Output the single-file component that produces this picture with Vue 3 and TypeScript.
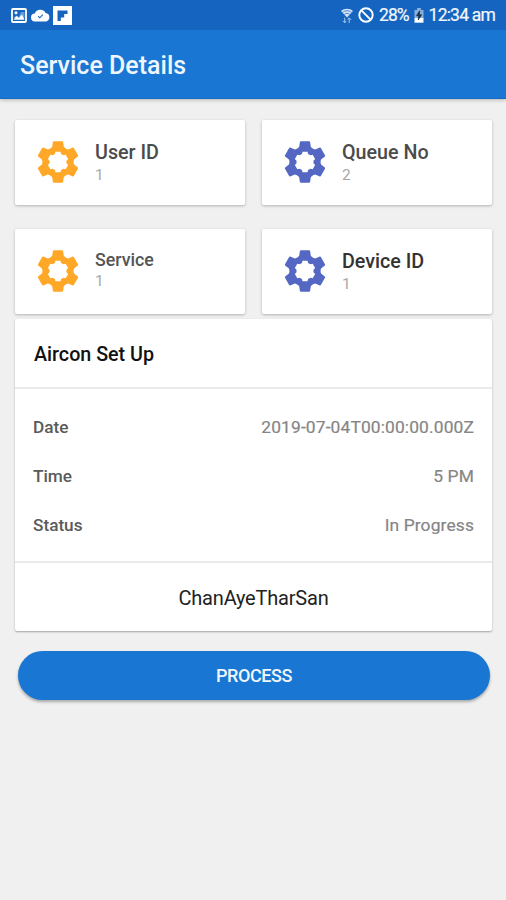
<script setup lang="ts">
interface Tile {
  label: string
  value: string
  tone: 'amber' | 'indigo'
  kind: string
}

const tiles: Tile[] = [
  { label: 'User ID', value: '1', tone: 'amber', kind: 'user' },
  { label: 'Queue No', value: '2', tone: 'indigo', kind: 'queue' },
  { label: 'Service', value: '1', tone: 'amber', kind: 'service' },
  { label: 'Device ID', value: '1', tone: 'indigo', kind: 'device' },
]

const rows = [
  { label: 'Date', value: '2019-07-04T00:00:00.000Z', kind: 'date' },
  { label: 'Time', value: '5 PM', kind: 'time' },
  { label: 'Status', value: 'In Progress', kind: 'status' },
]

// Closed six-lobed outline; each lobe is given as [sideways, outward] points.
function lobes(points: [number, number][]): string {
  const out: string[] = []
  for (let i = 0; i < 6; i++) {
    const a = (i * Math.PI) / 3
    for (const [x, r] of points) {
      const px = x * Math.cos(a) + r * Math.sin(a)
      const py = x * Math.sin(a) - r * Math.cos(a)
      out.push(`${px.toFixed(2)} ${py.toFixed(2)}`)
    }
  }
  return `M${out.join('L')}Z`
}

const gearPath =
  lobes([[-7, 14], [-5.8, 15.2], [-5.1, 20], [-4.4, 20.7], [4.4, 20.7], [5.1, 20], [5.8, 15.2], [7, 14]]) +
  lobes([[-3.1, 8], [-2.5, 10.3], [2.5, 10.3], [3.1, 8]])
</script>

<template>
  <div class="screen">
    <header class="top">
      <div class="status-bar">
        <div class="notices">
          <svg class="picture" viewBox="0 0 16 15">
            <rect x="1" y="1" width="14" height="13" rx="1" fill="none" stroke="#fff" stroke-width="1.8" />
            <path d="M2.5 9.2 5.5 7.6l2.4 1.2L10 4h3.5v6H2.5z" fill="#fff" opacity=".35" />
            <path d="M2.5 11.7 5.5 8l2.4 2.1L11 6.5l2.5 5.2z" fill="#fff" />
            <circle cx="5" cy="4.8" r="1.5" fill="#fff" />
          </svg>
          <svg class="cloud" viewBox="0 0 19 13">
            <path d="M4.3 12.5a4 4 0 0 1-.5-8A6 6 0 0 1 14.6 4a4.3 4.3 0 0 1 .2 8.5z" fill="#fff" />
            <path d="m7.2 7.2 1.6 1.6 3-3.2" fill="none" stroke="#1764c0" stroke-width="1.1" />
          </svg>
          <svg class="flip" viewBox="0 0 19 19">
            <path fill="#fff" fill-rule="evenodd" d="M0 0h19v19H0zM4.5 4.5v10.5h3.3v-3.5h3.4V8h3.3V4.5z" />
          </svg>
        </div>
        <div class="indicators">
          <svg class="wifi" viewBox="0 0 14 17">
            <path d="M1 3.9c3.6-3 8.4-3 12 0L7 10.5z" fill="#d3e3f5" />
            <path d="M2.5 5.4c2.8-2.2 6.2-2.2 9 0M4.4 7.4c1.8-1.3 3.4-1.3 5.2 0" fill="none" stroke="#1764c0" stroke-width=".7" />
            <path d="M4.7 10.7v5M2.7 13.8l2 2 1.5-1.8M9.2 16v-5M7.7 12.6l1.5-1.7 2 2" fill="none" stroke="#a5c4e9" stroke-width="1" />
          </svg>
          <svg class="blocked" viewBox="0 0 16 16">
            <circle cx="8" cy="8" r="6.7" fill="none" stroke="#fff" stroke-width="1.9" />
            <path d="m3.4 3.4 9.2 9.2" stroke="#fff" stroke-width="1.9" />
          </svg>
          <span class="percent">28%</span>
          <svg class="battery" viewBox="0 0 10 15">
            <path d="M3 0h4v2h2.5v8H.5V2H3z" fill="#88afd9" />
            <path d="M.5 10h9v4.7h-9z" fill="#fff" />
            <path d="m5.7 2.8-3.2 5h2.2L4.2 12l3.4-5.2H5.4z" fill="#172f48" stroke="#172f48" stroke-width=".7" />
          </svg>
          <span class="clock">12:34 am</span>
        </div>
      </div>
      <h1 class="title">Service Details</h1>
    </header>

    <main class="content">
      <section class="tiles">
        <article v-for="tile in tiles" :key="tile.label" class="tile" :class="tile.kind">
          <svg class="gear" :class="tile.tone" viewBox="-21 -21 42 42">
            <path :d="gearPath" fill-rule="evenodd" />
          </svg>
          <div class="tile-text">
            <h2>{{ tile.label }}</h2>
            <p>{{ tile.value }}</p>
          </div>
        </article>
      </section>

      <section class="details">
        <h2 class="details-title">Aircon Set Up</h2>
        <dl class="rows">
          <div v-for="row in rows" :key="row.label" class="row" :class="row.kind">
            <dt>{{ row.label }}</dt>
            <dd>{{ row.value }}</dd>
          </div>
        </dl>
        <p class="township">ChanAyeTharSan</p>
      </section>

      <button class="process" type="button">PROCESS</button>
    </main>
  </div>
</template>

<style>
body {
  margin: 0;
  background: #f0f0f0;
}
</style>

<style scoped>
.screen {
  min-height: 900px;
  box-sizing: border-box;
  background: #f0f0f0;
  font-family: Roboto, "Liberation Sans", sans-serif;
}
h1, h2, p, dl, dt, dd {
  margin: 0;
}
svg {
  display: block;
  flex: none;
}
.top {
  height: 99px;
  background: #1976d2;
  border-bottom: 1px solid #146bc1;
  box-sizing: border-box;
  box-shadow: 0 1px 4px rgba(0, 0, 0, 0.25);
}
.status-bar {
  display: flex;
  justify-content: space-between;
  height: 30px;
  padding: 0 11px;
  background: #1565c0;
  color: #f2f7fd;
}
.notices, .indicators {
  display: flex;
  align-items: center;
}
.picture {
  width: 16px;
  height: 15px;
}
.cloud {
  width: 19px;
  height: 13px;
  margin-left: 4px;
}
.flip {
  width: 19px;
  height: 19px;
  margin-left: 3px;
}
.indicators {
  height: 30px;
  font-size: 17.5px;
  line-height: 33px;
  letter-spacing: -0.8px;
  white-space: nowrap;
}
.percent, .clock {
  -webkit-text-stroke: 0.2px;
}
.percent {
  padding-top: 1px;
  letter-spacing: -1px;
}
.clock {
  padding-top: 1px;
}
.wifi {
  width: 14px;
  height: 17px;
}
.blocked {
  width: 16px;
  height: 16px;
  margin: 0 5px 0 4px;
}
.battery {
  width: 10px;
  height: 15px;
  margin: 0 5px 0 5px;
}
.title {
  padding-left: 20px;
  font-size: 25px;
  font-weight: 500;
  line-height: 72px;
  color: #eef5fd;
}
.content {
  padding: 21px 14px 0 15px;
}
.tiles {
  display: grid;
  grid-template-columns: 230px 230px;
  column-gap: 17px;
  row-gap: 24px;
}
.tile {
  display: flex;
  align-items: center;
  height: 85px;
  padding: 0 0 1px 22px;
  box-sizing: border-box;
  border-radius: 2px;
  background: #fff;
  box-shadow: 0 1px 3px rgba(0, 0, 0, 0.26);
}
.gear {
  width: 42px;
  height: 42px;
}
.amber {
  fill: #ffa726;
}
.indigo {
  fill: #5468c3;
}
.tile-text {
  padding: 4px 0 0 16px;
}
.tile h2 {
  font-size: 19.7px;
  font-weight: 500;
  line-height: 23px;
  color: #4b4b4b;
}
.tile p {
  font-size: 15.5px;
  line-height: 23px;
  color: #a8a8a8;
}
.tile.service h2 {
  font-size: 17.8px;
  line-height: 20px;
  color: #555;
}
.tile.service .tile-text {
  padding: 1px 0 0 16px;
}
.tile.device h2 {
  color: #333;
}
.details {
  height: 312px;
  margin-top: 5px;
  border-radius: 2px;
  background: #fff;
  box-shadow: 0 1px 2px rgba(0, 0, 0, 0.32);
}
.details-title {
  height: 68px;
  padding-left: 19px;
  font-size: 19.7px;
  font-weight: 500;
  line-height: 72px;
  color: #111;
}
.rows {
  height: 174px;
  padding: 14px 18px 10px;
  box-sizing: border-box;
  border-top: 2px solid #ebebeb;
}
.row {
  display: flex;
  justify-content: space-between;
  font-size: 17.2px;
  line-height: 49px;
}
.row dt {
  font-weight: 500;
  color: #5a5a5a;
}
.row dd {
  font-size: 17.4px;
  letter-spacing: 0.13px;
  -webkit-text-stroke: 0.2px;
  color: #858585;
}
.township {
  height: 70px;
  border-top: 2px solid #ebebeb;
  box-sizing: border-box;
  text-align: center;
  font-size: 20px;
  letter-spacing: -0.2px;
  line-height: 70px;
  color: #222;
}
.process {
  display: block;
  width: 472px;
  height: 49px;
  margin: 20px 0 0 3px;
  padding: 0;
  border: 0;
  border-radius: 25px;
  background: #1976d2;
  box-shadow: 0 2px 3px rgba(0, 0, 0, 0.3);
  color: #f0f6fd;
  font: 500 18px/49px Roboto, "Liberation Sans", sans-serif;
  letter-spacing: -0.4px;
}
</style>
